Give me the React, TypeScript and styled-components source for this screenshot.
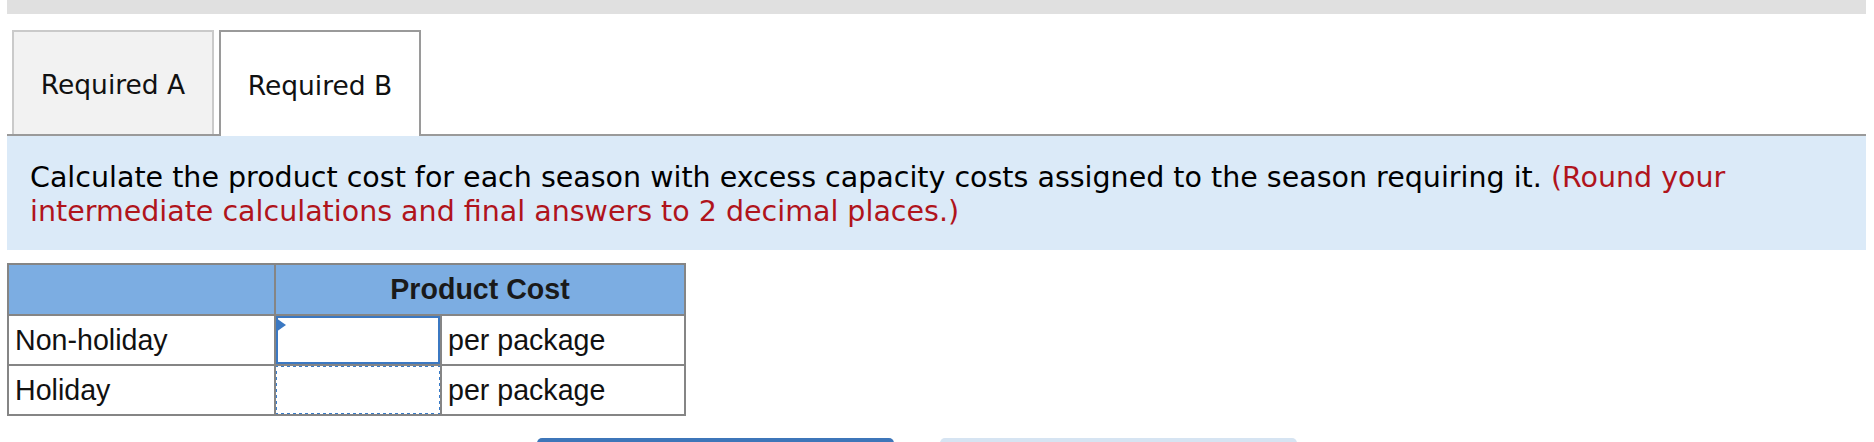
import styled, { createGlobalStyle } from 'styled-components';

const GlobalStyle = createGlobalStyle`
	html, body {
		margin: 0;
		height: 442px;
		overflow: hidden;
		background: #ffffff;
	}
	body {
		font-family: 'DejaVu Sans', Verdana, sans-serif;
	}
`;

const rows = [
	{ label: 'Non-holiday', unit: 'per package', active: true },
	{ label: 'Holiday', unit: 'per package', active: false },
];

export default function App() {
	return (
		<>
			<GlobalStyle />
			<Page>
				<TopBar />
				<TabStrip>
					<Tab>Required A</Tab>
					<Tab $active>Required B</Tab>
				</TabStrip>
				<Instructions>
					Calculate the product cost for each season with excess capacity costs assigned to the season
					requiring it. <Note>(Round your intermediate calculations and final answers to 2 decimal places.)</Note>
				</Instructions>
				<CostTable>
					<colgroup>
						<Column $width={267} />
						<Column $width={166} />
						<Column $width={244} />
					</colgroup>
					<thead>
						<tr>
							<HeadCell />
							<HeadCell colSpan={2}>Product Cost</HeadCell>
						</tr>
					</thead>
					<tbody>
						{rows.map((row) => (
							<tr key={row.label}>
								<Cell>{row.label}</Cell>
								<InputCell>
									{row.active ? (
										<ActiveInput>
											<Answer type='text' />
										</ActiveInput>
									) : (
										<PendingInput />
									)}
								</InputCell>
								<Cell>{row.unit}</Cell>
							</tr>
						))}
					</tbody>
				</CostTable>
				<ButtonRow>
					<NavButton $primary />
					<NavButton />
				</ButtonRow>
			</Page>
		</>
	);
}

const Page = styled.div`
	padding: 0 8px 0 7px;
`;

const TopBar = styled.div`
	height: 14px;
	background: #e0e0e0;
`;

const TabStrip = styled.div`
	margin-top: 16px;
	display: flex;
	align-items: flex-end;
	gap: 5px;
	padding-left: 5px;
	border-bottom: 2px solid #9a9a9a;
	height: 106px;
	box-sizing: border-box;
`;

const Tab = styled.div<{ $active?: boolean }>`
	box-sizing: border-box;
	width: 202px;
	height: ${(p) => (p.$active ? '106px' : '104px')};
	margin-bottom: ${(p) => (p.$active ? '-2px' : '0')};
	border: 2px solid ${(p) => (p.$active ? '#9a9a9a' : '#cacaca')};
	border-bottom: none;
	background: ${(p) => (p.$active ? '#ffffff' : '#f2f2f2')};
	display: flex;
	align-items: center;
	justify-content: center;
	padding-top: 2px;
	font-size: 26.5px;
	color: #111111;
`;

const Instructions = styled.div`
	background: #dbeaf8;
	padding: 25px 24px 21px 23px;
	font-size: 28.5px;
	line-height: 34px;
	color: #000000;
`;

const Note = styled.span`
	color: #b0141c;
`;

const CostTable = styled.table`
	margin-top: 13px;
	width: 677px;
	border-collapse: collapse;
	border: 2px solid #858585;
	table-layout: fixed;
	font-family: 'Liberation Sans', Arial, sans-serif;
	font-size: 28.6px;
	color: #111111;
`;

const Column = styled.col<{ $width: number }>`
	width: ${(p) => p.$width}px;
`;

const HeadCell = styled.th`
	height: 49px;
	background: #7cade2;
	border: 2px solid #858585;
	font-weight: 700;
	text-align: center;
	color: #1a1a1a;
	padding: 0;
`;

const Cell = styled.td`
	height: 48px;
	border: 2px solid #858585;
	padding: 0 6px;
	white-space: nowrap;
`;

const InputCell = styled.td`
	height: 48px;
	border: 2px solid #858585;
	padding: 0;
`;

const ActiveInput = styled.div`
	position: relative;
	height: 48px;
	&::before {
		content: '';
		position: absolute;
		top: 2px;
		left: 0;
		border-top: 7px solid transparent;
		border-bottom: 7px solid transparent;
		border-left: 10px solid #3b78c2;
	}
`;

const Answer = styled.input`
	box-sizing: border-box;
	width: 100%;
	height: 100%;
	margin: 0;
	border: 2px solid #3b78c2;
	outline: none;
	background: #ffffff;
	font: inherit;
`;

const PendingInput = styled.div`
	box-sizing: border-box;
	height: 52px;
	margin: -2px;
	border: 3px dotted #3a7cc8;
`;

const ButtonRow = styled.div`
	margin-top: 22px;
	padding-left: 530px;
	display: flex;
	gap: 46px;
`;

const NavButton = styled.button<{ $primary?: boolean }>`
	width: 357px;
	height: 56px;
	border: none;
	border-radius: 5px;
	background: ${(p) => (p.$primary ? '#3e76b9' : '#d6e4f2')};
`;
